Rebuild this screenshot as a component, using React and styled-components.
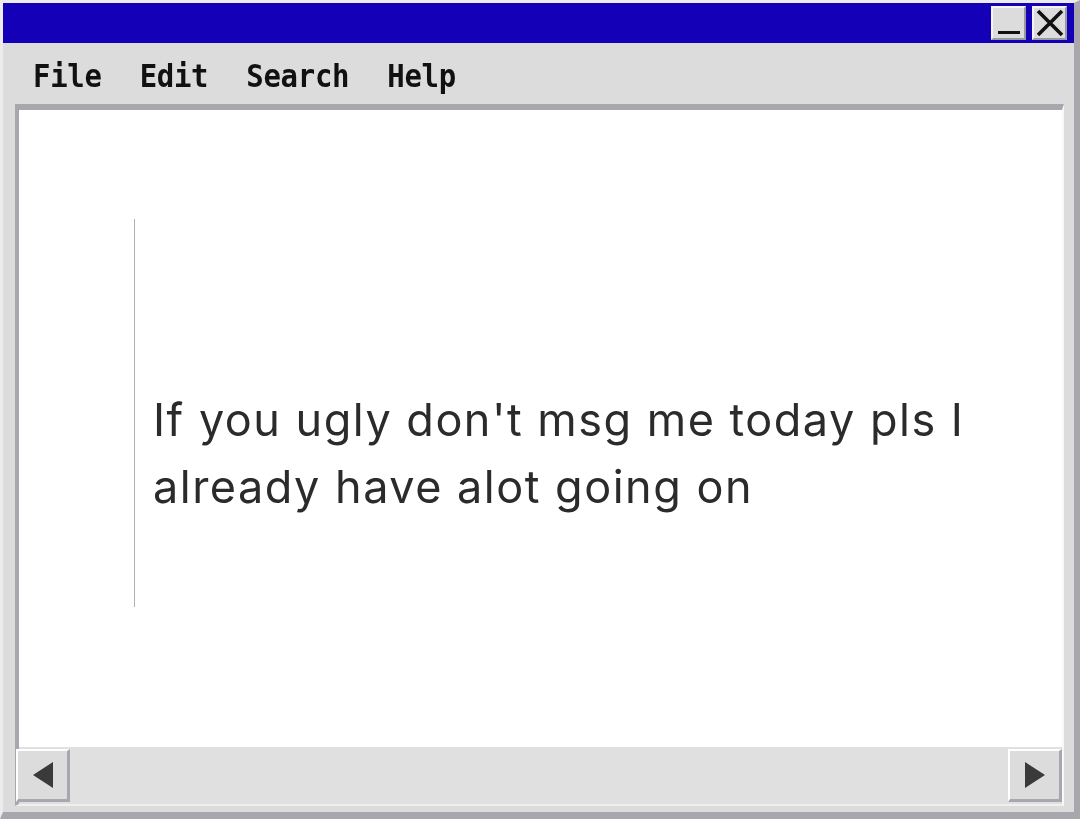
import React from "react";
import styled, { createGlobalStyle } from "styled-components";

const Global = createGlobalStyle`
  html, body { margin: 0; padding: 0; background: #dcdcdc; }
  #root { width: 1080px; height: 819px; }
`;

const Window = styled.div`
  box-sizing: border-box;
  width: 1080px;
  height: 819px;
  display: flex;
  flex-direction: column;
  background: #dcdcdc;
  border-top: 3px solid #ececec;
  border-left: 3px solid #ececec;
  border-right: 6px solid #aaa6ae;
  border-bottom: 7px solid #aaa6ae;
`;

const TitleBar = styled.div`
  height: 40px;
  background: #1400b6;
  display: flex;
  justify-content: flex-end;
  align-items: center;
  gap: 6px;
  padding-right: 7px;
`;

const TitleButton = styled.button`
  box-sizing: border-box;
  width: 35px;
  height: 34px;
  padding: 0;
  margin: 0;
  background: #dcdcdc;
  border-top: 2px solid #f4f4f4;
  border-left: 2px solid #f4f4f4;
  border-right: 2px solid #9c98a0;
  border-bottom: 2px solid #9c98a0;
  display: flex;
  align-items: center;
  justify-content: center;
`;

const MenuBar = styled.div`
  height: 61px;
  display: flex;
  align-items: center;
  gap: 38px;
  padding-left: 30px;
  padding-top: 5px;
  box-sizing: border-box;
  font-family: "DejaVu Sans Mono", "Liberation Mono", monospace;
  font-weight: bold;
  font-size: 29px;
  letter-spacing: -0.3px;
  color: #111;
`;

const MenuItem = styled.span`
  display: inline-block;
  transform: scaleY(1.12);
`;

const Frame = styled.div`
  flex: 1;
  margin: 0 10px 6px 12px;
  display: flex;
  flex-direction: column;
  border-top: 6px solid #aaa6ae;
  border-left: 4px solid #aaa6ae;
  border-right: 2px solid #f8f8f8;
  border-bottom: 2px solid #f0f0f0;
`;

const Document = styled.div`
  flex: 1;
  background: #fff;
  display: flex;
  align-items: center;
  padding-left: 115px;
`;

const Quote = styled.div`
  border-left: 1px solid #b0b0b0;
  height: 388px;
  display: flex;
  align-items: center;
  padding-left: 18px;
  margin-top: -32px;
`;

const Tweet = styled.p`
  margin: 0;
  margin-top: 80px;
  font-family: "Inter", "Open Sans", sans-serif;
  font-size: 45px;
  line-height: 67px;
  color: #2b2b2b;
  letter-spacing: 1.5px;
  max-width: 860px;
  filter: blur(0.4px);
`;

const ScrollBar = styled.div`
  height: 57px;
  background: #e0e0e0;
  display: flex;
  justify-content: space-between;
  align-items: flex-end;
  padding-bottom: 2px;
  box-sizing: border-box;
`;

const ScrollButton = styled.div`
  box-sizing: border-box;
  width: 54px;
  height: 53px;
  margin-left: ${(p) => (p.$start ? "-3px" : "0")};
  background: #dcdcdc;
  border-top: 2px solid #ffffff;
  border-left: 2px solid #ffffff;
  border-right: 3px solid #aaa6ae;
  border-bottom: 3px solid #aaa6ae;
  display: flex;
  align-items: center;
  justify-content: center;
`;

export default function App() {
  return (
    <>
      <Global />
      <Window>
        <TitleBar>
          <TitleButton aria-label="minimize">
            <svg width="30" height="30" viewBox="0 0 30 30">
              <rect x="4" y="23" width="22" height="3" fill="#111" />
            </svg>
          </TitleButton>
          <TitleButton aria-label="close">
            <svg width="30" height="30" viewBox="0 0 30 30">
              <path d="M3 3 L27 27 M27 3 L3 27" stroke="#111" strokeWidth="3.6" />
            </svg>
          </TitleButton>
        </TitleBar>
        <MenuBar>
          <MenuItem>File</MenuItem>
          <MenuItem>Edit</MenuItem>
          <MenuItem>Search</MenuItem>
          <MenuItem>Help</MenuItem>
        </MenuBar>
        <Frame>
          <Document>
            <Quote>
              <Tweet>
                If you ugly don't msg me today pls I already have alot going on
              </Tweet>
            </Quote>
          </Document>
          <ScrollBar>
            <ScrollButton $start>
              <svg width="24" height="32" viewBox="0 0 24 32">
                <polygon points="2,16 22,3 22,29" fill="#3a3a3a" />
              </svg>
            </ScrollButton>
            <ScrollButton>
              <svg width="24" height="32" viewBox="0 0 24 32">
                <polygon points="22,16 2,3 2,29" fill="#3a3a3a" />
              </svg>
            </ScrollButton>
          </ScrollBar>
        </Frame>
      </Window>
    </>
  );
}
